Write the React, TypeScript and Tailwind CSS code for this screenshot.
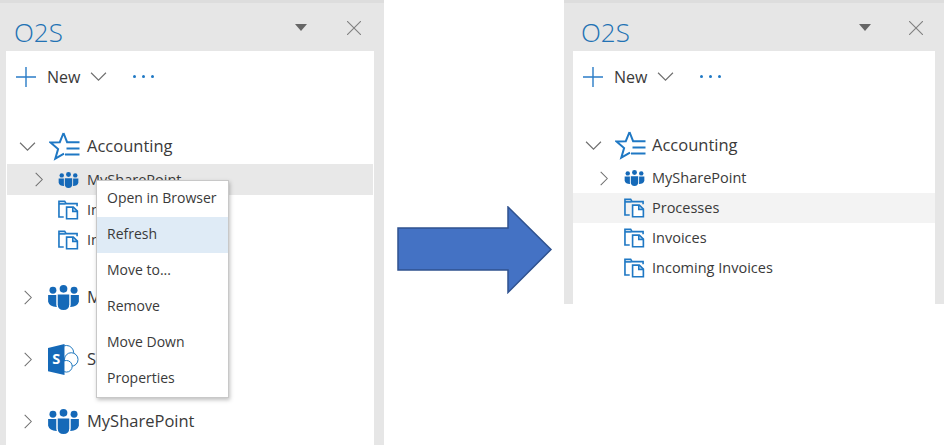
import React from "react";

const Chevron = ({ dir, className }: { dir: "right" | "down"; className: string }) => (
  <svg viewBox="0 0 16 16" className={className} fill="none" stroke="#6f6f6f" strokeWidth="1.1">
    {dir === "right" ? <path d="M5 1l7 7-7 7" /> : <path d="M1 4.5l7 7 7-7" />}
  </svg>
);

const Star = ({ className }: { className: string }) => (
  <svg viewBox="0 0 31 30" className={className} fill="none" stroke="#1f78c4" strokeWidth="2">
    <path d="M14.5 2l3.6 9.2H30.5M14.5 2l-3.7 9.2-9.3.3 7.6 6.6-2.8 9.6 8.7-5" strokeLinejoin="miter" />
    <path d="M17.5 17.4h13M16 23.6h14.5" />
  </svg>
);

const People = ({ className }: { className: string }) => (
  <svg viewBox="0 0 32 26" className={className} fill="#1569b8">
    <circle cx="5" cy="5.5" r="3.6" />
    <circle cx="16" cy="4" r="4" />
    <circle cx="27" cy="5.5" r="3.6" />
    <path d="M0 10.5h8.5v9.5q0 1.6.6 2.8Q1.5 23 0 17.5z" />
    <path d="M32 10.5h-8.5v9.5q0 1.6-.6 2.8 7.6.2 9.1-5.3z" />
    <path d="M10 10h12v10q0 6-6 6t-6-6z" />
  </svg>
);

const Folder = ({ className }: { className: string }) => (
  <svg viewBox="0 0 22 20" className={className} fill="none" stroke="#1f78c4" strokeWidth="1.7">
    <path d="M6 17.3H1V1h6l1.5 2.3H20V6" />
    <path d="M1 3.6h7" />
    <path d="M9 7h7l4.3 4.2v8H9z" fill="#fff" />
    <path d="M15.5 7v4.5h4.8" />
  </svg>
);

const SharePoint = ({ className }: { className: string }) => (
  <svg viewBox="0 0 32 32" className={className}>
    <circle cx="19" cy="9" r="7.5" fill="#fff" stroke="#1b75bc" strokeWidth="1" />
    <circle cx="24" cy="16" r="7" fill="#fff" stroke="#1b75bc" strokeWidth="1" />
    <circle cx="19" cy="23" r="6" fill="#fff" stroke="#1b75bc" strokeWidth="1" />
    <path d="M0 4l17-4v32L0 28z" fill="#1569b8" />
    <text x="8.5" y="21" textAnchor="middle" fontSize="15" fontWeight="700" fill="#fff" fontFamily="'Open Sans', sans-serif">S</text>
  </svg>
);

const Toolbar = () => (
  <div className="flex h-[51px] shrink-0 items-center pl-[10px]">
    <svg viewBox="0 0 20 20" className="h-5 w-5" stroke="#2a7cc7" strokeWidth="1.4">
      <path d="M10 0v20M0 10h20" />
    </svg>
    <span className="ml-[11px] text-[16px] leading-none text-[#3a3a3a]">New</span>
    <Chevron dir="down" className="ml-[10px] h-[17px] w-[17px]" />
    <div className="ml-[26px] flex gap-[6px]">
      <span className="h-[3px] w-[3px] rounded-full bg-[#1f78c4]" />
      <span className="h-[3px] w-[3px] rounded-full bg-[#1f78c4]" />
      <span className="h-[3px] w-[3px] rounded-full bg-[#1f78c4]" />
    </div>
  </div>
);

const Header = ({ tri, pad }: { tri: string; pad: string }) => (
  <div className={`flex h-[51px] shrink-0 items-center border-t-[3px] border-[#dddddd] ${pad}`}>
    <span className="mt-[9px] text-[26px] font-light leading-none text-[#2272b4]">O2S</span>
    <svg viewBox="0 0 12 8" className={tri}>
      <path d="M0 0h12L6 7z" fill="#666" />
    </svg>
    <svg viewBox="0 0 14 14" className="mt-[1px] h-[14px] w-[14px]" fill="none" stroke="#808080" strokeWidth="1.1">
      <path d="M0 0l14 14M14 0L0 14" />
    </svg>
  </div>
);

const menu = ["Open in Browser", "Refresh", "Move to...", "Remove", "Move Down", "Properties"];

const Menu = () => (
  <div className="absolute left-[96px] top-[180px] w-[133px] border border-[#c8c8c8] bg-white shadow-[1px_2px_4px_rgba(0,0,0,0.25)]">
    {menu.map((m) => (
      <div
        key={m}
        className={`flex h-[36px] items-center pb-[3px] pl-[10px] text-[14px] text-[#3a3a3a] ${m === "Refresh" ? "bg-[#dfebf6]" : ""}`}
      >
        {m}
      </div>
    ))}
  </div>
);

export default function App() {
  return (
    <div className="flex h-[445px] w-[944px] overflow-hidden bg-white font-['Open_Sans','Noto_Sans',sans-serif]">
      {/* Left panel */}
      <div className="relative flex h-[445px] w-[384px] shrink-0 flex-col bg-[#e6e6e6]">
        <Header pad="pl-[14px]" tri="ml-[232px] mr-[40px] mt-[2px] h-[8px] w-[12px]" />
        <div className="ml-[6px] flex h-[394px] w-[368px] flex-col overflow-hidden bg-white">
          <Toolbar />
          <div className="mt-[26px] flex h-[36px] shrink-0 items-center pl-[13px]">
            <Chevron dir="down" className="h-[17px] w-[17px]" />
            <Star className="ml-[13px] h-[30px] w-[31px]" />
            <span className="ml-[7px] text-[16.5px] text-[#3a3a3a]">Accounting</span>
          </div>
          <div className="mx-[1px] flex h-[31px] shrink-0 items-center bg-[#e8e8e8] pl-[24px]">
            <Chevron dir="right" className="h-[15px] w-[15px]" />
            <People className="ml-[12px] h-[16px] w-[21px]" />
            <span className="ml-[8px] text-[14.5px] text-[#3a3a3a]">MySharePoint</span>
          </div>
          <div className="flex h-[30px] shrink-0 items-center pl-[52px]">
            <Folder className="h-[20px] w-[21px]" />
            <span className="ml-[8px] text-[14.5px] text-[#3a3a3a]">Invoices</span>
          </div>
          <div className="flex h-[30px] shrink-0 items-center pl-[52px]">
            <Folder className="h-[20px] w-[21px]" />
            <span className="ml-[8px] text-[14.5px] text-[#3a3a3a]">Invoices</span>
          </div>
          <div className="mt-[11px] flex h-[62px] shrink-0 items-center pl-[14px]">
            <Chevron dir="right" className="h-[15px] w-[15px]" />
            <People className="ml-[13px] h-[25px] w-[31px]" />
            <span className="ml-[8px] text-[16.5px] text-[#3a3a3a]">MySharePoint</span>
          </div>
          <div className="flex h-[62px] shrink-0 items-center pl-[14px]">
            <Chevron dir="right" className="h-[15px] w-[15px]" />
            <SharePoint className="ml-[13px] h-[31px] w-[31px]" />
            <span className="ml-[8px] text-[16.5px] text-[#3a3a3a]">SharePoint</span>
          </div>
          <div className="flex h-[62px] shrink-0 items-center pl-[14px]">
            <Chevron dir="right" className="h-[15px] w-[15px]" />
            <People className="ml-[13px] h-[25px] w-[31px]" />
            <span className="ml-[8px] text-[16.5px] text-[#3a3a3a]">MySharePoint</span>
          </div>
        </div>
        <Menu />
      </div>

      {/* Arrow */}
      <div className="flex w-[180px] shrink-0 items-start pl-[13px] pt-[206px]">
        <svg viewBox="0 0 156 88" className="h-[88px] w-[156px]">
          <path d="M1 22h110V1l43 42.5-43 43V64H1z" fill="#4472c4" stroke="#2f528f" strokeWidth="1.5" />
        </svg>
      </div>

      {/* Right panel */}
      <div className="flex h-[304px] w-[380px] shrink-0 flex-col bg-[#e6e6e6]">
        <Header pad="pl-[17px]" tri="ml-[229px] mr-[38px] mt-[2px] h-[8px] w-[12px]" />
        <div className="ml-[9px] flex h-[253px] w-[362px] flex-col bg-white">
          <Toolbar />
          <div className="mt-[25px] flex h-[36px] shrink-0 items-center pl-[12px]">
            <Chevron dir="down" className="h-[17px] w-[17px]" />
            <Star className="ml-[13px] h-[30px] w-[31px]" />
            <span className="ml-[6px] text-[16.5px] text-[#3a3a3a]">Accounting</span>
          </div>
          <div className="flex h-[30px] shrink-0 items-center pl-[23px]">
            <Chevron dir="right" className="h-[15px] w-[15px]" />
            <People className="ml-[13px] h-[16px] w-[21px]" />
            <span className="ml-[7px] text-[14.5px] text-[#3a3a3a]">MySharePoint</span>
          </div>
          <div className="flex h-[30px] shrink-0 items-center bg-[#f3f3f3] pl-[51px]">
            <Folder className="h-[20px] w-[21px]" />
            <span className="ml-[7px] text-[14.5px] text-[#3a3a3a]">Processes</span>
          </div>
          <div className="flex h-[30px] shrink-0 items-center pl-[51px]">
            <Folder className="h-[20px] w-[21px]" />
            <span className="ml-[7px] text-[14.5px] text-[#3a3a3a]">Invoices</span>
          </div>
          <div className="flex h-[30px] shrink-0 items-center pl-[51px]">
            <Folder className="h-[20px] w-[21px]" />
            <span className="ml-[7px] text-[14.5px] text-[#3a3a3a]">Incoming Invoices</span>
          </div>
        </div>
      </div>
    </div>
  );
}
